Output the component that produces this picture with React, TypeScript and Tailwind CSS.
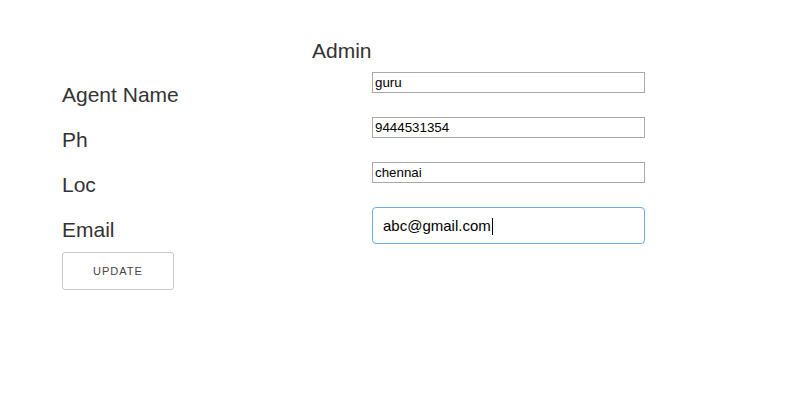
export default function App() {
  const rows = [
    { label: "Agent Name", value: "guru" },
    { label: "Ph", value: "9444531354" },
    { label: "Loc", value: "chennai" },
  ];

  return (
    <div
      className="min-h-screen bg-white text-[#333]"
      style={{ fontFamily: '"Liberation Sans", Arial, sans-serif' }}
    >
      <div className="pl-[62px] pt-[39px]">
        <h1 className="pl-[250px] text-[21px] leading-[24px] font-normal">Admin</h1>
        <div className="mt-[9px] flex flex-col">
          {rows.map((r) => (
            <div key={r.label} className="flex h-[45px] items-start">
              <label className="mt-[11px] w-[310px] text-[21px] leading-[24px]">{r.label}</label>
              <input
                readOnly
                value={r.value}
                className="h-[21px] w-[273px] border border-[#a9a9a9] px-[2px] text-[13.33px] text-black outline-none"
              />
            </div>
          ))}
          <div className="flex h-[45px] items-start">
            <label className="mt-[11px] w-[310px] text-[21px] leading-[24px]">Email</label>
            <div className="flex h-[37px] w-[273px] items-center rounded-[4px] border border-[#66afe9] px-[10px] pt-[2px] text-[15px] text-black">
              <span>abc@gmail.com</span>
              <span className="ml-[1px] h-[17px] w-px bg-black" />
            </div>
          </div>
        </div>
        <button className="flex h-[38px] w-[112px] items-center justify-center rounded-[3px] border border-[#c8c8c8] bg-white pt-px text-[11px] tracking-[1px] text-[#444]">
          UPDATE
        </button>
      </div>
    </div>
  );
}
